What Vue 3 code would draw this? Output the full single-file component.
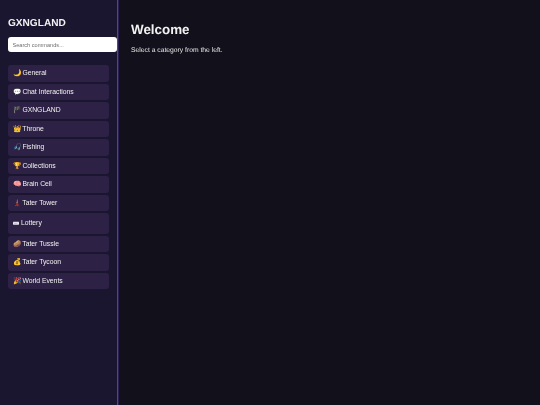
<script setup>
const items = [
  ['🌙', 'General'],
  ['💬', 'Chat Interactions'],
  ['🏴', 'GXNGLAND'],
  ['👑', 'Throne'],
  ['🎣', 'Fishing'],
  ['🏆', 'Collections'],
  ['🧠', 'Brain Cell'],
  ['🗼', 'Tater Tower'],
  ['', 'Lottery', true],
  ['🥔', 'Tater Tussle'],
  ['💰', 'Tater Tycoon'],
  ['🎉', 'World Events']
]
</script>

<template>
  <div class="page">
    <aside class="sidebar">
      <h2 class="brand">GXNGLAND</h2>
      <input class="search" type="text" placeholder="Search commands..." />
      <nav class="list">
        <button v-for="it in items" :key="it[1]" class="item" :class="{ tall: it[2] }">
          <svg v-if="it[2]" class="ticket" viewBox="0 0 12 7" aria-hidden="true">
            <rect x="0" y="0.5" width="12" height="6" rx="0.8" fill="#eceaf2" />
            <path d="M2.5 3.5h7" stroke="#7a7688" stroke-width="1.2" stroke-dasharray="1.4 0.8" />
          </svg>{{ it[2] ? '' : it[0] + ' ' }}{{ it[1] }}
        </button>
      </nav>
    </aside>
    <main class="content">
      <div class="copy">
        <h1 class="title">Welcome</h1>
        <p class="lead">Select a category from the left.</p>
      </div>
    </main>
  </div>
</template>

<style>
html, body { margin: 0; padding: 0; background: #12101a; }
</style>

<style scoped>
.page {
  display: flex;
  width: 540px;
  height: 405px;
  overflow: hidden;
  font-family: "Liberation Sans", Arial, sans-serif;
  text-rendering: geometricPrecision;
  color: #f2f2f2;
  filter: blur(0.25px);
}
.sidebar {
  position: relative;
  z-index: 1;
  box-sizing: border-box;
  width: 118px;
  flex: none;
  padding: 17px 8px 0;
  background: #1b1630;
  border-right: 1px solid #5f36b8;
  box-shadow: 1px 0 0 #2c1d55;
}
.brand {
  margin: 0 0 6px;
  font-size: 10.1px;
  line-height: 14px;
  font-weight: 700;
  color: #f2f2f2;
}
.search {
  display: block;
  box-sizing: border-box;
  width: 109px;
  height: 15px;
  margin: 0 0 13px;
  padding: 0 4.5px;
  border: 0;
  border-radius: 3px;
  background: #ffffff;
  font-family: inherit;
  font-size: 5.6px;
  color: #333;
  outline: none;
}
.search::placeholder { color: #6f6f6f; }
.list {
  display: flex;
  flex-direction: column;
  gap: 2px;
  width: 101px;
}
.item {
  display: block;
  box-sizing: border-box;
  width: 100%;
  height: 16.5px;
  padding: 0 4.5px;
  border: 0;
  border-radius: 3px;
  background: #2d2145;
  color: #f2f2f2;
  font-family: inherit;
  font-size: 6.8px;
  line-height: 16px;
  text-align: left;
  white-space: nowrap;
}
.item.tall { height: 20.5px; }
.ticket {
  width: 6px;
  height: 4.5px;
  margin-right: 2.5px;
  vertical-align: -0.3px;
}
.content {
  flex: 1;
  padding: 20.5px 13px;
  background: #12101a;
}
.copy { filter: grayscale(1); }
.title {
  margin: 0;
  font-size: 13.4px;
  line-height: 17px;
  font-weight: 700;
  color: #f2f2f2;
}
.lead {
  margin: 9px 0 0;
  font-size: 6.75px;
  line-height: 8px;
  color: #e8e8e8;
}
</style>
